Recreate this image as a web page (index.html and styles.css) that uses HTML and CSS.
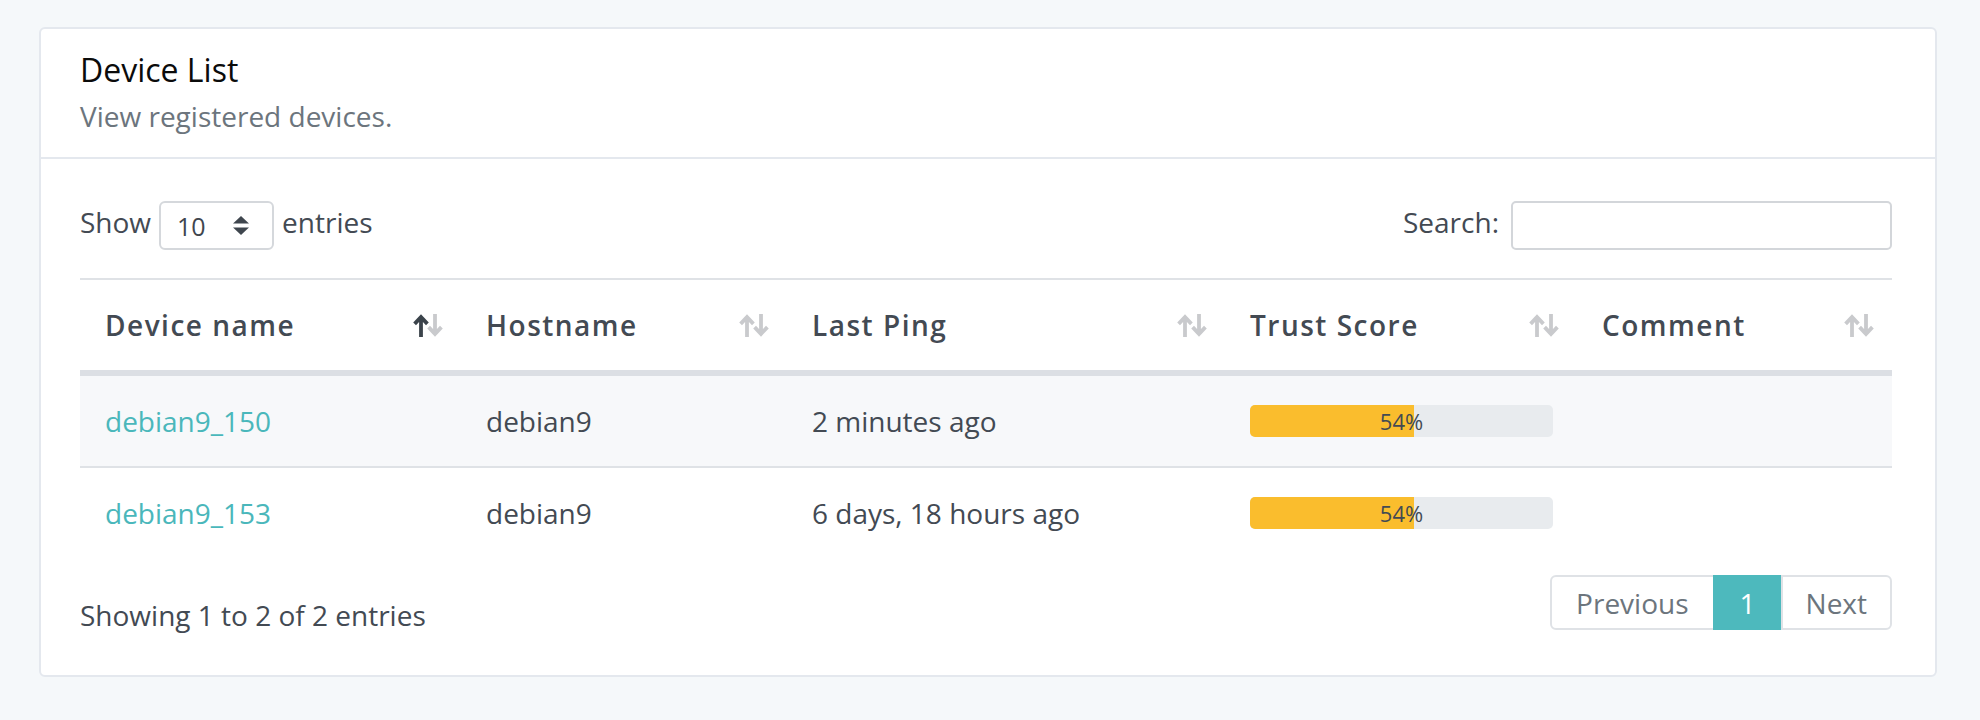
FILE: index.html
```html
<!DOCTYPE html>
<html lang="en">
<head>
<meta charset="utf-8">
<title>Device List</title>
<link rel="stylesheet" href="styles.css">
</head>
<body>
<div class="page">
  <div class="card">
    <div class="card-header">
      <div class="title">Device List</div>
      <div class="subtitle">View registered devices.</div>
    </div>
    <div class="card-body">
      <div class="controls">
        <div class="length">
          <span class="lbl">Show</span>
          <div class="select">
            <span class="select-value">10</span>
            <svg class="select-arrows" width="18" height="19" viewBox="0 0 18 19"><polygon points="1,7.5 9,0 17,7.5" fill="#3f464e"/><polygon points="1,11.5 9,19 17,11.5" fill="#3f464e"/></svg>
          </div>
          <span class="lbl">entries</span>
        </div>
        <div class="search">
          <span class="lbl">Search:</span>
          <div class="search-input"></div>
        </div>
      </div>
      <table class="devices">
        <colgroup>
          <col class="c1"><col class="c2"><col class="c3"><col class="c4"><col class="c5">
        </colgroup>
        <thead>
          <tr>
            <th><div class="th-inner"><span>Device name</span><svg class="sort" width="31" height="23" viewBox="0 0 31 23"><g fill="none" stroke-width="3.8"><path d="M8 4V23M1.6 9.9L8 3.1L14.4 9.9" stroke="#3b434b"/><path d="M22 0V19M15.6 13.1L22 19.9L28.4 13.1" stroke="#c9cacd"/></g></svg></div></th>
            <th><div class="th-inner"><span>Hostname</span><svg class="sort" width="31" height="23" viewBox="0 0 31 23"><g fill="none" stroke-width="3.8" stroke="#c9cacd"><path d="M8 4V23M1.6 9.9L8 3.1L14.4 9.9"/><path d="M22 0V19M15.6 13.1L22 19.9L28.4 13.1"/></g></svg></div></th>
            <th><div class="th-inner"><span>Last Ping</span><svg class="sort" width="31" height="23" viewBox="0 0 31 23"><g fill="none" stroke-width="3.8" stroke="#c9cacd"><path d="M8 4V23M1.6 9.9L8 3.1L14.4 9.9"/><path d="M22 0V19M15.6 13.1L22 19.9L28.4 13.1"/></g></svg></div></th>
            <th><div class="th-inner"><span>Trust Score</span><svg class="sort" width="31" height="23" viewBox="0 0 31 23"><g fill="none" stroke-width="3.8" stroke="#c9cacd"><path d="M8 4V23M1.6 9.9L8 3.1L14.4 9.9"/><path d="M22 0V19M15.6 13.1L22 19.9L28.4 13.1"/></g></svg></div></th>
            <th><div class="th-inner"><span>Comment</span><svg class="sort" width="31" height="23" viewBox="0 0 31 23"><g fill="none" stroke-width="3.8" stroke="#c9cacd"><path d="M8 4V23M1.6 9.9L8 3.1L14.4 9.9"/><path d="M22 0V19M15.6 13.1L22 19.9L28.4 13.1"/></g></svg></div></th>
          </tr>
        </thead>
        <tbody>
          <tr class="odd">
            <td><a class="link" href="#">debian9_150</a></td>
            <td>debian9</td>
            <td>2 minutes ago</td>
            <td><div class="bar"><div class="fill" style="width:54%"></div><div class="bar-label">54%</div></div></td>
            <td></td>
          </tr>
          <tr class="even">
            <td><a class="link" href="#">debian9_153</a></td>
            <td>debian9</td>
            <td>6 days, 18 hours ago</td>
            <td><div class="bar"><div class="fill" style="width:54%"></div><div class="bar-label">54%</div></div></td>
            <td></td>
          </tr>
        </tbody>
      </table>
      <div class="footer">
        <div class="info">Showing 1 to 2 of 2 entries</div>
        <ul class="pagination">
          <li class="page-item first"><a href="#">Previous</a></li>
          <li class="page-item active"><a href="#">1</a></li>
          <li class="page-item last"><a href="#">Next</a></li>
        </ul>
      </div>
    </div>
  </div>
</div>
</body>
</html>
```
FILE: styles.css
```css
* { box-sizing: border-box; }
html, body { margin: 0; padding: 0; }
body {
  background: #f5f8fa;
  font-family: "Open Sans", "Noto Sans", sans-serif;
  font-size: 28px;
  line-height: 40px;
  color: #434a53;
}
.page {
  padding: 27px 43px 0 39px;
}
.card {
  background: #fff;
  border: 2px solid #e4e8ee;
  border-radius: 6px;
}
.card-header {
  padding: 21px 41px 21px 39px;
  border-bottom: 2px solid #e4e8ee;
}
.title {
  font-size: 32px;
  line-height: 40px;
  color: #0b0b0b;
  margin-bottom: 6px;
}
.subtitle {
  font-size: 28px;
  line-height: 40px;
  color: #6c757d;
}
.card-body {
  padding: 41px 43px 40px 39px;
}
.controls {
  display: flex;
  justify-content: space-between;
  align-items: center;
  height: 51px;
}
.length, .search {
  display: flex;
  align-items: center;
}
.lbl {
  margin-bottom: 7px;
}
.select {
  width: 115px;
  height: 49px;
  margin: 0 8px;
  border: 2px solid #d5d8dc;
  border-radius: 6px;
  display: flex;
  align-items: center;
  justify-content: space-between;
  padding: 0 22px 0 16px;
}
.select-value {
  font-size: 25px;
  color: #3f464e;
  line-height: 30px;
}
.select-arrows { display: block; }
.search .lbl { margin-right: 12px; }
.search-input {
  width: 381px;
  height: 49px;
  border: 2px solid #d3d6da;
  border-radius: 5px;
}
.devices {
  width: 100%;
  margin-top: 27px;
  border-collapse: separate;
  border-spacing: 0;
  table-layout: fixed;
  border-top: 2px solid #dfe2e6;
}
col.c1 { width: 381px; }
col.c2 { width: 326px; }
col.c3 { width: 438px; }
col.c4 { width: 352px; }
col.c5 { width: 315px; }
.devices th {
  text-align: left;
  font-weight: 600;
  letter-spacing: 1.5px;
  color: #434a53;
  padding: 25px 17px 25px 25px;
  border-bottom: 6px solid #dcdfe4;
}
.th-inner {
  display: flex;
  justify-content: space-between;
  align-items: center;
}
.sort { display: block; flex: none; }
.devices td {
  padding: 25px 24px 25px 25px;
  vertical-align: middle;
  white-space: nowrap;
}
.devices tr.odd td {
  background: #f7f8fa;
  border-bottom: 2px solid #dfe2e6;
}
.link {
  color: #4ab7bb;
  text-decoration: none;
}
.bar {
  display: grid;
  height: 32px;
  background: #e8ebee;
  border-radius: 5px;
  overflow: hidden;
}
.fill, .bar-label {
  grid-area: 1 / 1;
}
.fill {
  background: #fabd2d;
  height: 32px;
  justify-self: start;
}
.bar-label {
  font-size: 22px;
  line-height: 32px;
  text-align: center;
  color: #434a53;
}
.footer {
  display: flex;
  justify-content: space-between;
  align-items: flex-start;
  margin-top: 17px;
}
.info {
  padding-top: 20px;
}
.pagination {
  list-style: none;
  margin: 0;
  padding: 0;
  display: flex;
}
.page-item a {
  display: block;
  padding: 6px 23px 5px;
  line-height: 40px;
  border: 2px solid #dfe2e6;
  color: #6c757d;
  text-decoration: none;
  margin-left: -2px;
}
.page-item.first a {
  margin-left: 0;
  border-radius: 6px 0 0 6px;
  padding-left: 24px;
  padding-right: 24px;
}
.page-item.last a {
  border-radius: 0 6px 6px 0;
}
.page-item.active a {
  background: #4db9bd;
  border-color: #4db9bd;
  color: #fff;
  padding-left: 25px;
  padding-right: 25px;
}
```
